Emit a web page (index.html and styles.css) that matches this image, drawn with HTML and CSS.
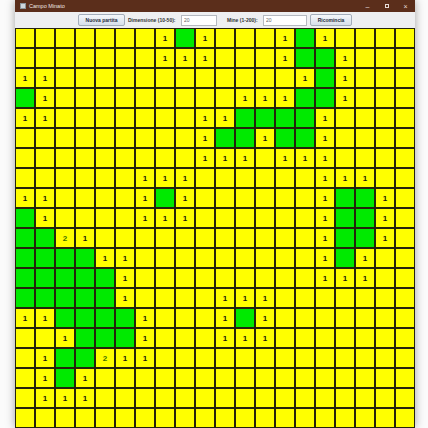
FILE: index.html
```html
<!DOCTYPE html>
<html>
<head>
	<title>Campo Minato</title>
	<link rel="stylesheet" href="styles.css">
</head>
<body>
	<div class="window">
		<div class="titlebar">
			<span class="app-icon"></span>
			<span class="title">Campo Minato</span>
			<span class="controls">
				<span class="ctl">&#8211;</span>
				<span class="ctl max"></span>
				<span class="ctl">&#215;</span>
			</span>
		</div>
		<div class="toolbar">
			<button type="button" class="btn btn-new">Nuova partita</button>
			<label class="lbl lbl-dim" for="dim">Dimensione (10-50):</label>
			<input type="text" id="dim" class="field field-dim" value="20">
			<label class="lbl lbl-mine" for="mine">Mine (1-200):</label>
			<input type="text" id="mine" class="field field-mine" value="20">
			<button type="button" class="btn btn-restart">Ricomincia</button>
		</div>
		<div class="board" id="board"></div>
	</div>
	<script type="text/javascript">
		// . = covered, g = open empty, digits = open with neighbours
		var rows = [
			".......1g1...1g1....",
			".......111...1gg1...",
			"11............1g1...",
			"g1.........111gg1...",
			"11.......11gggg1....",
			".........1gg1gg1....",
			".........111.111....",
			"......111......111..",
			"11....1g1......1gg1.",
			"g1....111......1gg1.",
			"gg21...........1gg1.",
			"gggg11.........1g1..",
			"ggggg1.........111..",
			"ggggg1....111.......",
			"11gggg1...1g1.......",
			"..1ggg1...111.......",
			".1gg211.............",
			".1g1................",
			".111................",
			"...................."
		];
		var board = document.getElementById("board");
		for (var r = 0; r < rows.length; r++) {
			for (var c = 0; c < rows[r].length; c++) {
				var ch = rows[r][c];
				var cell = document.createElement("div");
				cell.className = "cell";
				if (ch == "g") {
					cell.className += " open";
				} else if (ch != ".") {
					cell.className += " n" + ch;
					cell.textContent = ch;
				}
				board.appendChild(cell);
			}
		}
	</script>
</body>
</html>
```

FILE: styles.css
```css
body {
	margin: 0;
	background-color: #fbfbfb;
	font-family: "Liberation Sans", Arial, sans-serif;
}
.window {
	margin-left: 15px;
	width: 400px;
	height: 428px;
	display: flex;
	flex-direction: column;
	box-shadow: 0 0 9px rgba(0, 0, 0, 0.35);
}
.titlebar {
	height: 12px;
	background-color: #5b2e1b;
	display: flex;
	align-items: center;
	color: #efe6e2;
	font-size: 5.5px;
}
.app-icon {
	width: 6px;
	height: 6px;
	margin-left: 5px;
	background-color: #cfd6dc;
	border: 1px solid #8c959c;
	box-sizing: border-box;
}
.title {
	margin-left: 3px;
}
.controls {
	margin-left: auto;
	display: flex;
	align-items: center;
}
.ctl {
	width: 19px;
	text-align: center;
	font-size: 7px;
	color: #e6dcd8;
}
.ctl.max {
	width: 4px;
	height: 4px;
	margin: 0 7px 0 8px;
	border: 1px solid #e6dcd8;
	box-sizing: border-box;
}
.toolbar {
	height: 16px;
	background-color: #eeeff1;
	display: flex;
	align-items: center;
	justify-content: center;
}
.btn {
	height: 12px;
	padding: 0;
	font-family: "Liberation Sans", Arial, sans-serif;
	font-size: 5px;
	font-weight: bold;
	color: #1e2a3a;
	border: 1px solid #a3adbb;
	border-radius: 2px;
	background: linear-gradient(#f4f7fb, #d7dfe9);
}
.btn-new {
	width: 47px;
}
.btn-restart {
	width: 42px;
	margin-left: 3px;
}
.lbl {
	font-size: 5px;
	font-weight: bold;
	color: #333;
	white-space: nowrap;
}
.lbl-dim {
	width: 50px;
	margin-left: 3px;
}
.lbl-mine {
	width: 35px;
	margin-left: 10px;
}
.field {
	height: 11px;
	padding: 0 2px;
	box-sizing: border-box;
	border: 1px solid #b5b9c0;
	font-family: "Liberation Sans", Arial, sans-serif;
	font-size: 5px;
	color: #666;
	background-color: #fff;
}
.field-dim {
	width: 36px;
	margin-left: 3px;
}
.field-mine {
	width: 44px;
	margin-left: 1px;
}
.board {
	display: grid;
	grid-template-columns: repeat(20, 20px);
	grid-template-rows: repeat(20, 20px);
}
.cell {
	box-sizing: border-box;
	border: 1px solid #26240c;
	background-color: #ffff00;
	display: flex;
	align-items: center;
	justify-content: center;
	font-size: 8px;
	font-weight: bold;
	color: #151515;
}
.cell.open {
	background-color: #00ea00;
}
.cell.n2 {
	color: #3f6f00;
}
```
